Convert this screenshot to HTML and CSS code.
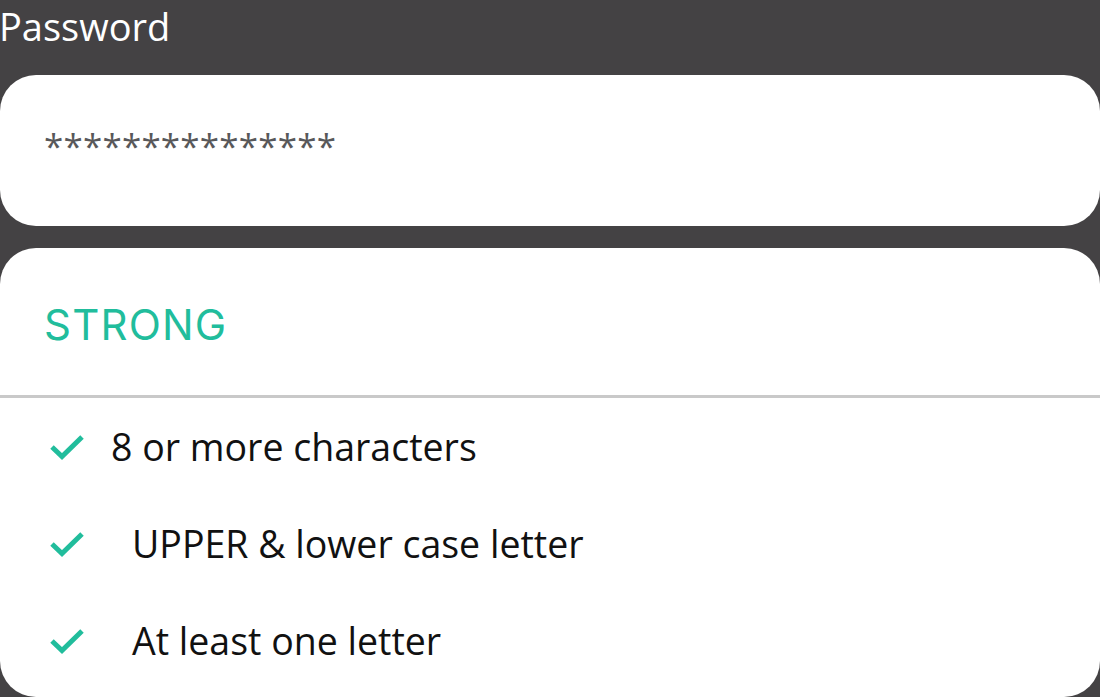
FILE: index.html
```html
<!DOCTYPE html>
<html lang="en">
<head>
<meta charset="utf-8">
<title>Password</title>
<link rel="stylesheet" href="styles.css">
</head>
<body>
<div class="page">
  <label class="field-label">Password</label>
  <div class="input-box">
    <span class="masked">***************</span>
  </div>
  <div class="strength-card">
    <div class="strength-head">
      <span class="strength-value">STRONG</span>
    </div>
    <ul class="rules">
      <li class="rule">
        <svg class="check" viewBox="0 0 36 28" width="36" height="28"><path d="M3 14 L13 23.5 L33 4" fill="none" stroke="#21bd9c" stroke-width="5" stroke-linecap="butt" stroke-linejoin="miter"/></svg>
        <span class="rule-text">8 or more characters</span>
      </li>
      <li class="rule">
        <svg class="check" viewBox="0 0 36 28" width="36" height="28"><path d="M3 14 L13 23.5 L33 4" fill="none" stroke="#21bd9c" stroke-width="5" stroke-linecap="butt" stroke-linejoin="miter"/></svg>
        <span class="rule-text rule-text--indent">UPPER &amp; lower case letter</span>
      </li>
      <li class="rule">
        <svg class="check" viewBox="0 0 36 28" width="36" height="28"><path d="M3 14 L13 23.5 L33 4" fill="none" stroke="#21bd9c" stroke-width="5" stroke-linecap="butt" stroke-linejoin="miter"/></svg>
        <span class="rule-text rule-text--indent">At least one letter</span>
      </li>
    </ul>
  </div>
</div>
</body>
</html>
```
FILE: styles.css
```css
html, body {
  margin: 0;
  padding: 0;
  background: #444244;
  width: 1100px;
  height: 697px;
  overflow: hidden;
  font-family: "Open Sans", "Noto Sans", sans-serif;
}

.page {
  display: flex;
  flex-direction: column;
}

.field-label {
  display: block;
  flex: none;
  color: #ffffff;
  font-size: 38px;
  line-height: 52px;
  height: 75px;
  box-sizing: border-box;
  margin-left: -1px;
}

.input-box {
  flex: none;
  background: #ffffff;
  height: 151px;
  border-radius: 36px;
  display: flex;
  align-items: center;
  padding-left: 44px;
  box-sizing: border-box;
}

.masked {
  color: #58585a;
  font-size: 35px;
  letter-spacing: 0.2px;
  margin-top: -10px;
}

.strength-card {
  flex: none;
  margin-top: 22px;
  background: #ffffff;
  height: 449px;
  border-radius: 36px;
  display: flex;
  flex-direction: column;
}

.strength-head {
  flex: none;
  height: 147px;
  display: flex;
  align-items: center;
  padding-left: 44px;
  border-bottom: 3px solid #c9c9c9;
}

.strength-value {
  font-family: "Inter", "Noto Sans", sans-serif;
  color: #21bd9c;
  font-size: 42px;
  font-weight: 400;
  letter-spacing: 1.2px;
  padding-top: 6px;
}

.rules {
  flex: none;
  list-style: none;
  margin: 0;
  padding: 0;
}

.rule {
  display: flex;
  align-items: center;
  height: 97px;
  padding-left: 49px;
}

.check {
  flex: none;
  display: block;
}

.rule-text {
  color: #111111;
  font-size: 37.5px;
  margin-left: 26px;
}

.rule-text--indent {
  margin-left: 47px;
}
```
